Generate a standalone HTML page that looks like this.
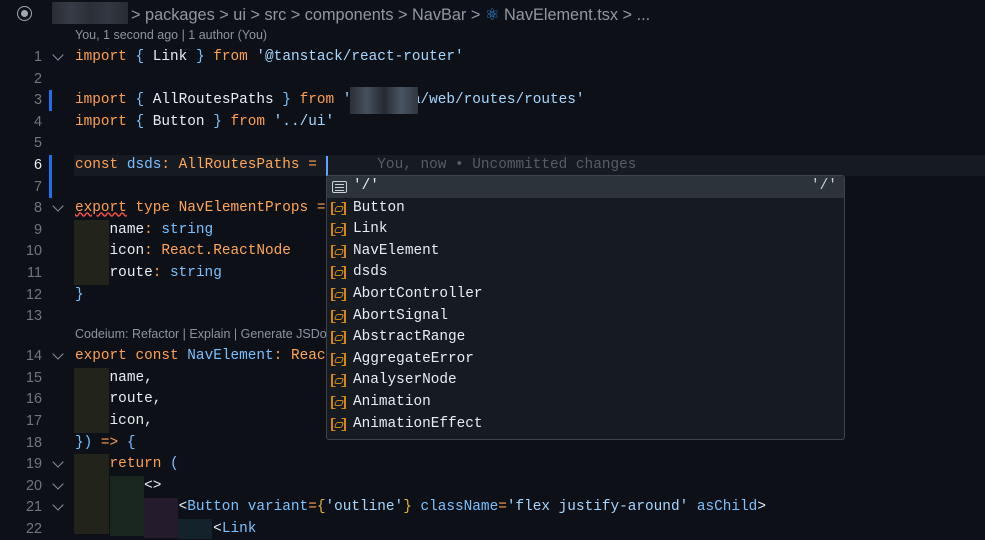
<!DOCTYPE html>
<html><head><meta charset="utf-8"><style>
body{margin:0;width:985px;height:525px;background:#0d1117;overflow:hidden;position:relative;font-family:"Liberation Mono",monospace;}
#w{position:absolute;left:0;top:2.5px;width:985px;height:525px}
.l{position:absolute;left:75px;height:21.6px;line-height:21.6px;font-size:14.4px;color:#e6edf3;white-space:pre;}
.n{position:absolute;width:42px;text-align:right;left:0;height:21.6px;line-height:21.6px;font-size:14.4px;color:#6e7681;font-family:"Liberation Sans",sans-serif;}
.f{position:absolute;left:54px;width:7px;height:7px;border-right:1.3px solid #8b949e;border-bottom:1.3px solid #8b949e;transform:rotate(45deg);}
.k{color:#ff9f50}.s{color:#a5d6ff}.b{color:#79c0ff}.t{color:#ffa657}.g{color:#8b949e}
.sans{font-family:"Liberation Sans",sans-serif}
.blk{position:absolute}
.sg{position:absolute;left:326px;top:175px;width:517px;height:263px;background:#161b22;border:1px solid #3d444d;border-radius:3px;}
.it{position:absolute;left:26px;height:21.6px;line-height:21.6px;font-size:14.4px;color:#e6edf3;white-space:pre}
.ic{position:absolute;left:4px;width:15px;height:13px;border:2px solid #d18616;border-top-width:1.5px;border-bottom-width:1.5px;box-sizing:border-box;clip-path:polygon(0 0,30% 0,30% 100%,0 100%,0 0,70% 0,100% 0,100% 100%,70% 100%,70% 0)}
.ic2{position:absolute;left:8px;width:8px;height:6px;border:1.4px solid #d18616;border-radius:2px;transform:skew(-20deg);box-sizing:border-box}
</style></head><body>
<!-- breadcrumb -->
<div class="blk" style="left:17px;top:6px;width:15px;height:15px;border:1.5px solid #a0a8b0;border-radius:50%;box-sizing:border-box"></div>
<div class="blk" style="left:21px;top:10px;width:7px;height:7px;background:#a0a8b0;border-radius:50%"></div>
<div class="blk" style="left:52px;top:2px;width:76px;height:22px;background:linear-gradient(90deg,#2a2f38,#3b414b,#2e333b,#363c45,#2a2f37);opacity:.9"></div>
<div class="blk sans" style="left:131px;top:5px;font-size:16.3px;color:#9198a1;white-space:pre">&gt; packages &gt; ui &gt; src &gt; components &gt; NavBar &gt; <span style="color:#2f8fe6">⚛</span> NavElement.tsx &gt; ...</div>
<div class="blk sans" style="left:75px;top:28px;font-size:12.5px;color:#8b949e">You, 1 second ago | 1 author (You)</div>

<div id="w">
<!-- current line highlight -->
<div class="blk" style="left:74px;top:152px;width:911px;height:21.6px;background:#161b22"></div>
<!-- modified bars -->
<div class="blk" style="left:49px;top:87px;width:3px;height:21px;background:#1f6feb"></div>
<div class="blk" style="left:49px;top:152px;width:3px;height:43px;background:#1f6feb"></div>
<!-- indent blocks -->
<div class="blk" style="left:74px;top:217px;width:35px;height:65px;background:#22231b"></div>
<div class="blk" style="left:74px;top:365px;width:35px;height:65px;background:#22231b"></div>
<div class="blk" style="left:74px;top:451px;width:35px;height:80px;background:#22231b"></div>
<div class="blk" style="left:110px;top:473px;width:34px;height:60px;background:#19261f"></div>
<div class="blk" style="left:144px;top:495px;width:34px;height:40px;background:#241b2c"></div>
<div class="blk" style="left:178px;top:516px;width:34px;height:20px;background:#14222c"></div>

<!-- line numbers -->
<div class="n" style="top:44px">1</div><div class="n" style="top:66px">2</div><div class="n" style="top:87px">3</div><div class="n" style="top:109px">4</div><div class="n" style="top:130px">5</div><div class="n" style="top:152px;color:#e6edf3">6</div><div class="n" style="top:174px">7</div><div class="n" style="top:195px">8</div><div class="n" style="top:217px">9</div><div class="n" style="top:238px">10</div><div class="n" style="top:260px">11</div><div class="n" style="top:282px">12</div><div class="n" style="top:303px">13</div>
<div class="n" style="top:343px">14</div><div class="n" style="top:365px">15</div><div class="n" style="top:386px">16</div><div class="n" style="top:408px">17</div><div class="n" style="top:430px">18</div><div class="n" style="top:451px">19</div><div class="n" style="top:473px">20</div><div class="n" style="top:494px">21</div><div class="n" style="top:516px">22</div>
<div class="f" style="top:48px"></div><div class="f" style="top:199px"></div><div class="f" style="top:347px"></div><div class="f" style="top:455px"></div><div class="f" style="top:477px"></div><div class="f" style="top:498px"></div>

<!-- code -->
<div class="l" style="top:44px"><span class="k">import</span> <span class="b">{</span> Link <span class="b">}</span> <span class="k">from</span> <span class="s">'@tanstack/react-router'</span></div>
<div class="l" style="top:87px"><span class="k">import</span> <span class="b">{</span> AllRoutesPaths <span class="b">}</span> <span class="k">from</span> <span class="s">'       a/web/routes/routes'</span></div>
<div class="blk" style="left:350px;top:84px;width:68px;height:27px;background:linear-gradient(90deg,#2a3039,#46505c,#252a32,#4a5563,#2f3640)"></div>
<div class="l" style="top:109px"><span class="k">import</span> <span class="b">{</span> Button <span class="b">}</span> <span class="k">from</span> <span class="s">'../ui'</span></div>
<div class="l" style="top:152px"><span class="k">const</span> <span class="b">dsds</span><span class="k">:</span> <span class="t">AllRoutesPaths</span> <span class="k">=</span>       <span style="color:#565d66">You, now • Uncommitted changes</span></div>
<div class="blk" style="left:326px;top:153px;width:2px;height:20px;background:#58a6ff"></div>
<div class="l" style="top:195px"><span class="k" style="text-decoration:underline wavy #f85149">export</span> <span class="k">type</span> <span class="t">NavElementProps</span> <span class="k">=</span></div>
<div class="l" style="top:217px">    name<span class="k">:</span> <span class="b">string</span></div>
<div class="l" style="top:238px">    icon<span class="k">:</span> <span class="t">React.ReactNode</span></div>
<div class="l" style="top:260px">    route<span class="k">:</span> <span class="b">string</span></div>
<div class="l" style="top:282px"><span class="b">}</span></div>
<div class="blk sans" style="left:75px;top:324px;font-size:12.5px;color:#8b949e">Codeium: Refactor | Explain | Generate JSDoc</div>
<div class="l" style="top:343px"><span class="k">export</span> <span class="k">const</span> <span class="b">NavElement</span><span class="k">:</span> <span class="t">React</span></div>
<div class="l" style="top:365px">    name,</div>
<div class="l" style="top:386px">    route,</div>
<div class="l" style="top:408px">    icon,</div>
<div class="l" style="top:430px"><span class="b">})</span> <span class="k">=&gt;</span> <span class="b">{</span></div>
<div class="l" style="top:451px">    <span class="k">return</span> <span class="b">(</span></div>
<div class="l" style="top:473px">        &lt;&gt;</div>
<div class="l" style="top:494px">            &lt;<span class="b">Button</span> <span class="b">variant</span><span class="k">=</span><span style="color:#e3b341">{</span><span class="s">'outline'</span><span style="color:#e3b341">}</span> <span class="b">className</span><span class="k">=</span><span class="s">'flex justify-around'</span> <span class="b">asChild</span>&gt;</div>
<div class="l" style="top:516px">                &lt;<span class="b">Link</span></div>
</div>

<!-- suggest -->
<div class="sg">
<div class="blk" style="left:0;top:0;width:517px;height:22px;background:#2d333b"></div>
<div class="blk" style="left:5px;top:5px;width:15px;height:12px;border:1.4px solid #c9d1d9;border-radius:2px;box-sizing:border-box;background:repeating-linear-gradient(#0000 0 2px,#c9d1d9 2px 3px);background-clip:content-box;padding:1px 2px"></div>
<div class="it" style="top:0">'/'</div>
<div class="it" style="top:0;left:484px;color:#c9d1d9">'/'</div>
<div class="ic" style="top:26px"></div><div class="ic2" style="top:29.5px"></div><div class="it" style="top:22px">Button</div>
<div class="ic" style="top:47px"></div><div class="ic2" style="top:50.5px"></div><div class="it" style="top:43px">Link</div>
<div class="ic" style="top:69px"></div><div class="ic2" style="top:72.5px"></div><div class="it" style="top:65px">NavElement</div>
<div class="ic" style="top:90px"></div><div class="ic2" style="top:93.5px"></div><div class="it" style="top:86px">dsds</div>
<div class="ic" style="top:112px"></div><div class="ic2" style="top:115.5px"></div><div class="it" style="top:108px">AbortController</div>
<div class="ic" style="top:134px"></div><div class="ic2" style="top:137.5px"></div><div class="it" style="top:130px">AbortSignal</div>
<div class="ic" style="top:155px"></div><div class="ic2" style="top:158.5px"></div><div class="it" style="top:151px">AbstractRange</div>
<div class="ic" style="top:177px"></div><div class="ic2" style="top:180.5px"></div><div class="it" style="top:173px">AggregateError</div>
<div class="ic" style="top:198px"></div><div class="ic2" style="top:201.5px"></div><div class="it" style="top:194px">AnalyserNode</div>
<div class="ic" style="top:220px"></div><div class="ic2" style="top:223.5px"></div><div class="it" style="top:216px">Animation</div>
<div class="ic" style="top:242px"></div><div class="ic2" style="top:245.5px"></div><div class="it" style="top:238px">AnimationEffect</div>
</div>
</body></html>
